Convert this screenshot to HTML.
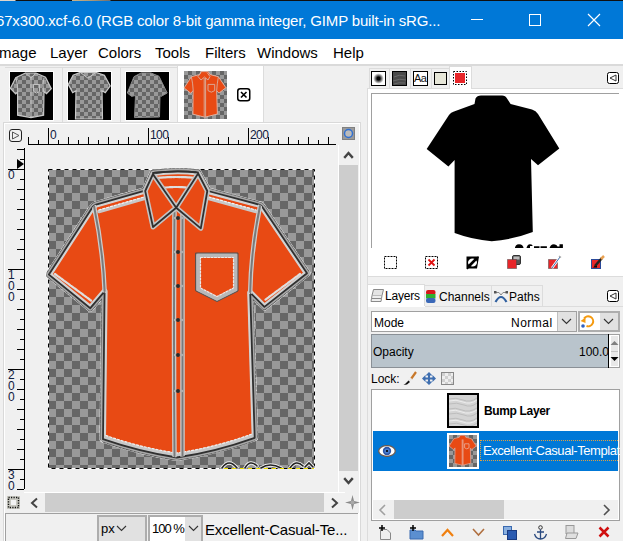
<!DOCTYPE html>
<html><head><meta charset="utf-8">
<style>
*{margin:0;padding:0;box-sizing:border-box}
html,body{width:623px;height:541px;overflow:hidden;background:#f0f0f0;font-family:"Liberation Sans",sans-serif;position:relative}
.a{position:absolute}
.t{position:absolute;white-space:nowrap;line-height:1}
</style></head><body>
<!-- title bar -->
<div class="a" style="left:0;top:0;width:623px;height:39px;background:#0078d7"></div>
<div class="a" style="left:0;top:0;width:623px;height:1px;background:linear-gradient(90deg,#ddd5cc 0,#ddd5cc 15px,#101010 16px,#101010 72px,#c8b48c 72px,#a89878 92px,#707070 110px,#101010 111px,#101010 100%)"></div>
<div class="t" style="left:-4px;top:13px;font-size:15px;color:#fff;letter-spacing:-0.16px">67x300.xcf-6.0 (RGB color 8-bit gamma integer, GIMP built-in sRG...</div>
<div class="a" style="left:471px;top:19px;width:12px;height:1px;background:#fff"></div>
<div class="a" style="left:529px;top:14px;width:12px;height:12px;border:1px solid #fff"></div>
<svg class="a" style="left:587px;top:13px" width="14" height="14"><path d="M1 1L13 13M13 1L1 13" stroke="#fff" stroke-width="1.2"/></svg>
<!-- menu bar -->
<div class="a" style="left:0;top:39px;width:623px;height:25px;background:#fff"></div>
<div class="t" style="top:45px;font-size:15px;color:#000;left:-1px">mage</div>
<div class="t" style="top:45px;font-size:15px;color:#000;left:50px">Layer</div>
<div class="t" style="top:45px;font-size:15px;color:#000;left:98px">Colors</div>
<div class="t" style="top:45px;font-size:15px;color:#000;left:155px">Tools</div>
<div class="t" style="top:45px;font-size:15px;color:#000;left:205px">Filters</div>
<div class="t" style="top:45px;font-size:15px;color:#000;left:257px">Windows</div>
<div class="t" style="top:45px;font-size:15px;color:#000;left:333px">Help</div>
<div class="a" style="left:0;top:64px;width:623px;height:2px;background:#dadada"></div>
<!-- left image tabs -->
<div class="a" style="left:5px;top:67px;width:173px;height:1px;background:#dcdcdc"></div>
<div class="a" style="left:62px;top:68px;width:1px;height:54px;background:#dcdcdc"></div>
<div class="a" style="left:120px;top:68px;width:1px;height:54px;background:#dcdcdc"></div>
<div class="a" style="left:177px;top:66px;width:87px;height:57px;background:#fff;border-left:1px solid #dcdcdc;border-right:1px solid #dcdcdc"></div>
<svg class="a" style="left:0;top:0" width="270" height="122">
<defs><pattern id="c1" x="10" y="72" width="8" height="8" patternUnits="userSpaceOnUse"><rect width="8" height="8" fill="#999"/><rect x="4" width="4" height="4" fill="#666"/><rect y="4" width="4" height="4" fill="#666"/></pattern><pattern id="c2" x="68" y="72" width="8" height="8" patternUnits="userSpaceOnUse"><rect width="8" height="8" fill="#999"/><rect x="4" width="4" height="4" fill="#666"/><rect y="4" width="4" height="4" fill="#666"/></pattern><pattern id="c3" x="126" y="72" width="8" height="8" patternUnits="userSpaceOnUse"><rect width="8" height="8" fill="#999"/><rect x="4" width="4" height="4" fill="#666"/><rect y="4" width="4" height="4" fill="#666"/></pattern><pattern id="c4" x="184" y="71" width="8" height="8" patternUnits="userSpaceOnUse"><rect width="8" height="8" fill="#999"/><rect x="4" width="4" height="4" fill="#666"/><rect y="4" width="4" height="4" fill="#666"/></pattern></defs>
<rect x="9.5" y="71.5" width="44" height="49" fill="#000" stroke="#fff"/>
<rect x="67.5" y="71.5" width="44" height="49" fill="#000" stroke="#fff"/>
<rect x="125.5" y="71.5" width="44" height="49" fill="#000" stroke="#fff"/>
<rect x="184" y="71" width="43" height="48" fill="url(#c4)"/>
<polygon points="25.3,73 35.9,73 45.5,77.2 51.3,88.75 46.5,93.6 44.0,91.6 43.6,115.2 31.0,117.6 17.6,115.2 17.6,92.1 15.7,94 10.4,88.3 15.7,77.7" fill="url(#c1)" stroke="#c8c8c8" stroke-width="1.2"/>
<path d="M31 78V117M33.5 84.5H39.5V91.5L36.5 93L33.5 91.5Z M25.3 73L31 78L35.9 73M16 78Q18 85 17.6 92M44 78Q42 85 43.6 92" fill="none" stroke="#c0c0c0" stroke-width="1"/>
<polygon points="80.3,72.4 95.7,72.4 104.4,75.3 110.2,85.9 105.3,92.6 102,90.7 102.5,119 75.5,119 76,90.7 72.7,92.6 68.3,84.4 73.1,75.3" fill="url(#c2)" stroke="#c8c8c8" stroke-width="1.2"/>
<path d="M80.3 72.4L88 78.2L95.7 72.4" fill="none" stroke="#c8c8c8"/>
<polygon points="141.2,72.9 150.8,72.9 159,76.3 167.2,93 161,96.4 160,95.5 159.5,117 134.5,117.6 135.5,95.5 131.6,96.4 127.3,93 134,76.7" fill="url(#c3)" stroke="#8a8a8a" stroke-width="1"/>
<polygon points="201.0,71.6 208.2,71.6 209.9,74.5 218.4,76.7 225.9,87.7 219.0,93.1 216.7,90.8 217.4,114.0 204.8,117.2 192.9,114.2 193.1,90.6 190.8,93.3 184.1,87.9 191.4,76.7 199.7,74.5" fill="#e84a14" stroke="#e0b0a0" stroke-width="1"/>
<path d="M204.2 78V117M205.6 78V117M191.4 77Q193 84 193.2 90.6M218.4 76.7Q217 84 216.7 90.8M208 84.4H214.7V90.6L211.3 92.2L208 90.6ZM201 72.5L198 76.5L201 80L204.5 77L208 80L210 76.5L207 72.5" fill="none" stroke="#d8b0a0" stroke-width="0.9"/>
</svg>
<svg class="a" style="left:237px;top:88px" width="14" height="14"><rect x="0.75" y="0.75" width="12" height="12" rx="2.5" fill="#fff" stroke="#000" stroke-width="1.5"/><path d="M4 4L9.5 9.5M9.5 4L4 9.5" stroke="#000" stroke-width="1.6"/></svg>
<!-- canvas frame -->
<div class="a" style="left:3px;top:122px;width:358px;height:419px;border:1px solid #d9d9d9;border-bottom:none"></div>
<div class="a" style="left:4px;top:123px;width:356px;height:418px;border:1px solid #fff;border-bottom:none"></div>
<!-- canvas -->
<svg class="a" style="left:9px;top:129px" width="14" height="14"><rect x="0.5" y="0.5" width="12" height="12" rx="2.5" fill="#f0f0f0" stroke="#222"/><path d="M3.5 3L10 6.5L3.5 10Z" fill="none" stroke="#555"/></svg>
<svg class="a" style="left:0;top:0" width="360" height="492"><path d="M28.5 137V144M38.5 140V144M48.5 128V144M58.5 140V144M68.5 137V144M78.5 140V144M88.5 137V144M98.5 140V144M108.5 137V144M118.5 140V144M128.5 137V144M138.5 140V144M148.5 128V144M158.5 140V144M168.5 137V144M178.5 140V144M188.5 137V144M198.5 140V144M208.5 137V144M218.5 140V144M228.5 137V144M238.5 140V144M248.5 128V144M258.5 140V144M268.5 137V144M278.5 140V144M288.5 137V144M298.5 140V144M308.5 137V144M318.5 140V144M328.5 137V144M28 144.5H336M17 149.5H24M20 159.5H24M8 169.5H24M20 179.5H24M17 189.5H24M20 199.5H24M17 209.5H24M20 219.5H24M17 229.5H24M20 239.5H24M17 249.5H24M20 259.5H24M8 269.5H24M20 279.5H24M17 289.5H24M20 299.5H24M17 309.5H24M20 319.5H24M17 329.5H24M20 339.5H24M17 349.5H24M20 359.5H24M8 369.5H24M20 379.5H24M17 389.5H24M20 399.5H24M17 409.5H24M20 419.5H24M17 429.5H24M20 439.5H24M17 449.5H24M20 459.5H24M8 469.5H24M20 479.5H24M17 489.5H24M24.5 148V489" stroke="#000" stroke-width="1" fill="none"/></svg>
<div class="t" style="left:50px;top:129px;font-size:12px;color:#102040;letter-spacing:-0.6px">0</div>
<div class="t" style="left:150px;top:129px;font-size:12px;color:#102040;letter-spacing:-0.6px">100</div>
<div class="t" style="left:250px;top:129px;font-size:12px;color:#102040;letter-spacing:-0.6px">200</div>
<div class="t" style="left:8px;top:170px;font-size:12px;color:#102040;width:7px;line-height:11px;white-space:normal">0</div>
<div class="t" style="left:8px;top:270px;font-size:12px;color:#102040;width:7px;line-height:11px;white-space:normal">1 0 0</div>
<div class="t" style="left:8px;top:370px;font-size:12px;color:#102040;width:7px;line-height:11px;white-space:normal">2 0 0</div>
<div class="a" style="left:0;top:470px;width:24px;height:21px;overflow:hidden"><div class="t" style="left:8px;top:0;font-size:12px;color:#102040;width:7px;line-height:11px;white-space:normal">3 0 0</div></div>
<svg class="a" style="left:17px;top:159px" width="8" height="11"><path d="M0 0L7 5L0 10Z" fill="#000"/></svg>
<svg class="a" style="left:342px;top:127px" width="14" height="14"><rect x="0" y="0" width="13" height="13" fill="#808080"/><rect x="1" y="1" width="11" height="11" fill="#9a9a9a"/><circle cx="6.5" cy="6.5" r="4" fill="#bbb" stroke="#2f6fd0" stroke-width="1.5"/></svg>
<!-- image -->
<svg class="a" style="left:0;top:0" width="360" height="492">
<defs><pattern id="chk" x="48" y="169" width="16" height="16" patternUnits="userSpaceOnUse"><rect width="16" height="16" fill="#999"/><rect x="8" width="8" height="8" fill="#666"/><rect y="8" width="8" height="8" fill="#666"/></pattern></defs>
<rect x="48" y="169" width="266" height="300" fill="url(#chk)"/>
<rect x="48.5" y="169.5" width="266" height="299" fill="none" stroke="#fff"/>
<rect x="48.5" y="169.5" width="266" height="299" fill="none" stroke="#000" stroke-dasharray="4 4"/>
<g fill="none" stroke-linecap="round">
<path d="M222 468Q229 458 237 468M245 468Q250 459 257 466M261 468Q270 462 281 468M290 468Q296 459 303 466M305 467L309 463L313 467" stroke="#eee" stroke-width="3.5"/>
<path d="M222 468Q229 458 237 468M245 468Q250 459 257 466M261 468Q270 462 281 468M290 468Q296 459 303 466M305 467L309 463L313 467" stroke="#222" stroke-width="1.6"/>
</g>
<path d="M220 468.5H314" stroke="#f0e000" stroke-dasharray="4 4" stroke-dashoffset="4"/>
<g id="shirt" stroke-linejoin="round" stroke-linecap="round">
<defs><clipPath id="bc"><path d="M153 173Q176 170 198 172.5L208 191L259 204.6Q262 205.5 263 208L307 273.3L264.4 306.9L250.2 292.7L254.7 437.8Q215 452 176.7 457.5Q140 452 103 439.2L104.6 291.4L90.3 308.2L48.9 274.6L92 208Q93.5 205.5 96 204.6L145 190.7Z"/></clipPath></defs>
<path d="M153 173Q176 170 198 172.5L208 191L259 204.6Q262 205.5 263 208L307 273.3L264.4 306.9L250.2 292.7L254.7 437.8Q215 452 176.7 457.5Q140 452 103 439.2L104.6 291.4L90.3 308.2L48.9 274.6L92 208Q93.5 205.5 96 204.6L145 190.7Z" fill="none" stroke="#fff" stroke-width="7"/><path d="M153 173Q176 170 198 172.5L208 191L259 204.6Q262 205.5 263 208L307 273.3L264.4 306.9L250.2 292.7L254.7 437.8Q215 452 176.7 457.5Q140 452 103 439.2L104.6 291.4L90.3 308.2L48.9 274.6L92 208Q93.5 205.5 96 204.6L145 190.7Z" fill="none" stroke="#555" stroke-width="6.4" stroke-dasharray="1.5 2.5"/>
<path d="M153 173Q176 170 198 172.5L208 191L259 204.6Q262 205.5 263 208L307 273.3L264.4 306.9L250.2 292.7L254.7 437.8Q215 452 176.7 457.5Q140 452 103 439.2L104.6 291.4L90.3 308.2L48.9 274.6L92 208Q93.5 205.5 96 204.6L145 190.7Z" fill="#e84a14" stroke="#a8a8a8" stroke-width="5"/>
<path d="M153 173Q176 170 198 172.5L208 191L259 204.6Q262 205.5 263 208L307 273.3L264.4 306.9L250.2 292.7L254.7 437.8Q215 452 176.7 457.5Q140 452 103 439.2L104.6 291.4L90.3 308.2L48.9 274.6L92 208Q93.5 205.5 96 204.6L145 190.7Z" fill="none" stroke="#d2d2d2" stroke-width="6" clip-path="url(#bc)"/>
<path d="M103 439.2Q140 452 176.7 457.5Q215 452 254.7 437.8" fill="none" stroke="#c8c8c8" stroke-width="9" clip-path="url(#bc)"/><path d="M106 435.5Q140 447.5 176.7 453Q215 447.5 252 434" fill="none" stroke="#f0f0f0" stroke-width="1.2" stroke-dasharray="2 2" clip-path="url(#bc)"/>
<path d="M153 173Q176 170 198 172.5L208 191L259 204.6Q262 205.5 263 208L307 273.3L264.4 306.9L250.2 292.7L254.7 437.8Q215 452 176.7 457.5Q140 452 103 439.2L104.6 291.4L90.3 308.2L48.9 274.6L92 208Q93.5 205.5 96 204.6L145 190.7Z" fill="none" stroke="#303030" stroke-width="1.8"/>
<g fill="none" clip-path="url(#bc)">
<path d="M94 206Q103 250 104.6 291M260 206Q251 250 250.2 292M174.5 212Q173.5 330 174.5 456M182.5 212V456" stroke="#cccccc" stroke-width="4.5"/>
<path d="M94 206Q103 250 104.6 291M260 206Q251 250 250.2 292M174.5 212Q173.5 330 174.5 456M182.5 212V456" stroke="#7a7a7a" stroke-width="2"/>
<path d="M198.2 255.2H235.8V289.5L217 299L198.2 289.5Z" stroke="#b8b8b8" stroke-width="4.5"/>
<path d="M196 253H238V291L217 301.5L196 291Z" stroke="#505050" stroke-width="1"/>
<path d="M200.5 257.5H233.5V288L217 296.5L200.5 288Z" stroke="#eaeaea" stroke-width="1.2" stroke-dasharray="2 1.5"/>
<path d="M99 211.5L144 198.5M209 198.5L256 211.5" stroke="#c8c8c8" stroke-width="3.5"/><path d="M99 210L144 197M209 197L256 210" stroke="#f4f4f4" stroke-width="1.2" stroke-dasharray="2 2"/>
<path d="M55 274L91 300.5M300 274L265 300M157 178Q176 176 195 178M162 188Q176 186 190 188" stroke="#dedede" stroke-width="2.2" stroke-dasharray="3 1"/>
<path d="M175 218H182M175 252H182M175 286H182M175 320H182M175 355H182M175 391H182" stroke="#b0b0b0" stroke-width="2.5"/>
</g>
<path d="M153 174L145.2 191L153 227L176.2 207.7L154.2 176ZM198.2 173.5L207.3 191L200.8 228.4L176.2 207.7L197 175.3Z" fill="#e84a14" stroke="#c4c4c4" stroke-width="5"/>
<path d="M153 174L145.2 191L153 227L176.2 207.7L154.2 176ZM198.2 173.5L207.3 191L200.8 228.4L176.2 207.7L197 175.3Z" fill="none" stroke="#303030" stroke-width="1.8"/>
<path d="M153 173Q176 170 198 172.5" fill="none" stroke="#303030" stroke-width="1.8"/>
<g fill="#2a2a2a"><circle cx="178" cy="218" r="2"/><circle cx="178" cy="252" r="2"/><circle cx="178" cy="286" r="2"/><circle cx="178" cy="320" r="2"/><circle cx="178" cy="355" r="2"/><circle cx="178" cy="391" r="2"/></g>
</g>
</svg>
<!-- scrollbars -->
<div class="a" style="left:338px;top:145px;width:1px;height:347px;background:#fff"></div>
<div class="a" style="left:339px;top:145px;width:19px;height:347px;background:#f0f0f0"></div>
<div class="a" style="left:339px;top:165px;width:19px;height:306px;background:#cdcdcd"></div>
<svg class="a" style="left:343px;top:149px" width="11" height="11"><path d="M2 8L5.5 4L9 8" fill="none" stroke="#444" stroke-width="2.4" stroke-linecap="square"/></svg>
<svg class="a" style="left:343px;top:476px" width="11" height="11"><path d="M2 3L5.5 7L9 3" fill="none" stroke="#444" stroke-width="2.4" stroke-linecap="square"/></svg>
<div class="a" style="left:45px;top:493px;width:279px;height:19px;background:#cdcdcd"></div>
<svg class="a" style="left:29px;top:497px" width="10" height="12"><path d="M8 1.5L3 6L8 10.5" fill="none" stroke="#444" stroke-width="2"/></svg>
<svg class="a" style="left:330px;top:497px" width="10" height="12"><path d="M2 1.5L7 6L2 10.5" fill="none" stroke="#444" stroke-width="2"/></svg>
<svg class="a" style="left:7px;top:496px" width="13" height="13"><rect x="0" y="0" width="13" height="13" fill="#c8c8c0"/><rect x="1.5" y="1.5" width="10" height="10" fill="none" stroke="#111" stroke-width="1.4" stroke-dasharray="1.2 1.3"/><rect x="4" y="4" width="5" height="5" fill="#f4f4f4"/></svg>
<svg class="a" style="left:345px;top:495px" width="15" height="15"><path d="M7.5 0L9 6L15 7.5L9 9L7.5 15L6 9L0 7.5L6 6Z" fill="#8a8a8a"/><circle cx="7.5" cy="7.5" r="2" fill="#a8a8a8"/></svg>
<!-- status bar -->
<div class="a" style="left:24px;top:492px;width:321px;height:1px;background:#fff"></div>
<div class="a" style="left:5px;top:513px;width:354px;height:1px;background:#a0a0a0"></div>
<div class="a" style="left:5px;top:513px;width:1px;height:28px;background:#a0a0a0"></div>
<div class="a" style="left:358px;top:513px;width:1px;height:28px;background:#fff"></div>
<div class="a" style="left:97px;top:515px;width:50px;height:28px;background:#e1e1e1;border:2px solid #adadad"></div>
<div class="t" style="left:101px;top:522px;font-size:13px;color:#000">px</div>
<svg class="a" style="left:116px;top:525px" width="11" height="7"><path d="M1 1L5.5 5.5L10 1" fill="none" stroke="#333" stroke-width="1.1"/></svg>
<div class="a" style="left:148px;top:515px;width:55px;height:28px;background:#fff;border:2px solid #adadad"></div>
<div class="a" style="left:185px;top:517px;width:16px;height:26px;background:#e1e1e1"></div>
<svg class="a" style="left:188px;top:525px" width="11" height="7"><path d="M1 1L5.5 5.5L10 1" fill="none" stroke="#333" stroke-width="1.1"/></svg>
<div class="t" style="left:152px;top:522px;font-size:13px;color:#000;letter-spacing:-1px">100 %</div>
<div class="t" style="left:205px;top:522px;font-size:15px;color:#000;letter-spacing:-0.17px">Excellent-Casual-Te...</div>
<!-- right dock -->
<div class="a" style="left:367px;top:88px;width:256px;height:453px;background:#f0f0f0;border-left:1px solid #dcdcdc"></div>
<!-- top tabs -->
<div class="a" style="left:368px;top:88px;width:255px;height:1px;background:#dcdcdc"></div>
<div class="a" style="left:369px;top:68px;width:81px;height:1px;background:#dcdcdc"></div>
<div class="a" style="left:369px;top:68px;width:1px;height:20px;background:#dcdcdc"></div>
<div class="a" style="left:389px;top:68px;width:1px;height:20px;background:#dcdcdc"></div>
<div class="a" style="left:410px;top:68px;width:1px;height:20px;background:#dcdcdc"></div>
<div class="a" style="left:431px;top:68px;width:1px;height:20px;background:#dcdcdc"></div>
<div class="a" style="left:449px;top:66px;width:23px;height:23px;background:#fff;border:1px solid #dcdcdc;border-bottom:none"></div>
<svg class="a" style="left:371px;top:71px" width="16" height="16"><defs><radialGradient id="brg"><stop offset="0" stop-color="#000"/><stop offset="0.2" stop-color="#000"/><stop offset="0.75" stop-color="#fff"/><stop offset="1" stop-color="#fff"/></radialGradient></defs><rect x="0.5" y="0.5" width="14" height="14" fill="url(#brg)" stroke="#000"/></svg>
<svg class="a" style="left:392px;top:71px" width="16" height="16"><rect x="0.5" y="0.5" width="14" height="14" fill="#4a4a4a" stroke="#000"/><path d="M2 6Q7 3 13 5M1 10Q8 7 14 9M2 13Q7 11 13 12" stroke="#6a6a6a" fill="none"/></svg>
<svg class="a" style="left:413px;top:71px" width="16" height="16"><rect x="0.5" y="0.5" width="14" height="14" fill="#fff" stroke="#000"/></svg>
<div class="t" style="left:414px;top:73px;font-size:11px;color:#111;letter-spacing:-0.5px">Aa</div>
<svg class="a" style="left:434px;top:72px" width="14" height="14"><rect x="0.5" y="0.5" width="12" height="12" fill="#e6e6d8" stroke="#000"/></svg>
<svg class="a" style="left:453px;top:71px" width="15" height="15"><rect x="0.5" y="0.5" width="13" height="13" fill="#fff" stroke="#000" stroke-dasharray="1.5 1.5"/><rect x="2" y="2" width="10" height="10" fill="#e8262a"/></svg>
<svg class="a" style="left:607px;top:72px" width="13" height="13"><rect x="0.5" y="0.5" width="11" height="11" rx="2" fill="#fff" stroke="#000"/><path d="M9 3L3 6L9 9Z" fill="none" stroke="#333"/></svg>
<!-- preview panel -->
<div class="a" style="left:368px;top:89px;width:255px;height:187px;background:#fff"></div>
<div class="a" style="left:371px;top:93px;width:248px;height:1px;background:#a0a0a0"></div>
<div class="a" style="left:371px;top:93px;width:1px;height:157px;background:#a0a0a0"></div>
<div class="a" style="left:368px;top:276px;width:255px;height:1px;background:#dcdcdc"></div>
<svg class="a" style="left:368px;top:89px" width="255" height="187">
<path d="M107.5 9.5Q109 6.5 113 6.5H134Q137.5 6.5 139 9.5L142.6 14.9L164 20.5Q168 21.5 170 25L191.3 59.6L170 76.2L163 70L164.8 142.9Q145 150.5 123.7 152.3Q104 150.5 86.6 144L86.6 71L80.4 77.6L58.7 60L81 26Q83 23 86 22.5L106.5 14.9Z" fill="#000"/>
<path d="M146.8 160Q147 155.5 151 155.3Q155.5 155.5 155.7 160ZM158.3 160Q159 155.5 162 155.3Q164.7 155.5 164.7 157H162V160ZM166 160V157.3H171.5V160ZM172.5 160V157.3H178.9V160ZM181.4 160Q182 155.5 186 155.3Q189 155.5 189.5 157.5L191.5 157.5V155.3H194.9V160Z" fill="#000"/>
</svg>
<div class="a" style="left:368px;top:248px;width:255px;height:28px;background:#fff"></div>
<svg class="a" style="left:384px;top:256px" width="14" height="14"><rect x="0.5" y="0.5" width="12" height="12" fill="none" stroke="#000" stroke-dasharray="2 1"/></svg>
<svg class="a" style="left:425px;top:256px" width="14" height="14"><rect x="0.5" y="0.5" width="12" height="12" fill="none" stroke="#000" stroke-dasharray="2 1"/><path d="M3.5 3.5L9.5 9.5M9.5 3.5L3.5 9.5" stroke="#e01010" stroke-width="1.8"/></svg>
<svg class="a" style="left:466px;top:256px" width="14" height="14"><path d="M0.5 0.5H13L11 12.5H0.5Z" fill="#000"/><ellipse cx="6.5" cy="6.5" rx="4.5" ry="4" fill="#fff"/><path d="M1 13L12 1" stroke="#000" stroke-width="1.5"/><path d="M3 10L10 3" stroke="#000" stroke-width="2.5"/></svg>
<svg class="a" style="left:507px;top:255px" width="14" height="15"><rect x="5.5" y="0.5" width="8" height="9" rx="1.5" fill="#555" stroke="#333"/><rect x="6.5" y="1.5" width="6" height="3" fill="#bbb"/><rect x="0.5" y="4.5" width="9" height="9" fill="#e8262a" stroke="#444" stroke-dasharray="1 1"/></svg>
<svg class="a" style="left:548px;top:255px" width="14" height="15"><rect x="0.5" y="4.5" width="9" height="9" fill="#e8262a" stroke="#444" stroke-dasharray="1 1"/><path d="M4 13L12 2" stroke="#fff" stroke-width="2.4"/><path d="M4 13L12 2" stroke="#4070b0" stroke-width="1"/><path d="M11 1L13 2.5" stroke="#aaa" stroke-width="1.5"/></svg>
<svg class="a" style="left:590px;top:255px" width="15" height="15"><rect x="1.5" y="4.5" width="9" height="9" fill="#e8262a" stroke="#2a4a9a"/><path d="M3 12.5L7 9V12.5Z" fill="#000"/><path d="M5 11L12 3" stroke="#222" stroke-width="2.5"/><path d="M11 4L14 1" stroke="#e8a050" stroke-width="2.5"/></svg>
<!-- layers tabs -->
<div class="a" style="left:367px;top:284px;width:58px;height:23px;background:#fff;border:1px solid #dcdcdc;border-bottom:none"></div>
<div class="a" style="left:425px;top:285px;width:118px;height:1px;background:#dcdcdc"></div>
<div class="a" style="left:425px;top:286px;width:67px;height:20px;border-right:1px solid #dcdcdc"></div>
<div class="a" style="left:492px;top:286px;width:51px;height:20px;border-right:1px solid #dcdcdc"></div>
<div class="a" style="left:368px;top:306px;width:255px;height:1px;background:#dcdcdc"></div>
<div class="a" style="left:368px;top:307px;width:255px;height:234px;background:#f0f0f0"></div>
<div class="a" style="left:368px;top:306px;width:57px;height:1px;background:#fff"></div>
<svg class="a" style="left:370px;top:288px" width="15" height="15"><path d="M3.5 1.5H13.5L12 7.5H2Z" fill="#e4e4e4" stroke="#8a8a8a"/><path d="M2 7.5L1.5 10.5H11.5L12 7.5M1.5 10.5L1 13.5H11L11.5 10.5" fill="#eee" stroke="#8a8a8a"/></svg>
<div class="t" style="left:385px;top:290px;font-size:12px;color:#000;letter-spacing:-0.2px">Layers</div>
<svg class="a" style="left:426px;top:290px" width="10" height="13"><rect x="0" y="0" width="9.5" height="5" rx="2" fill="#d81818"/><rect x="0" y="4" width="9.5" height="4.5" fill="#30b030"/><rect x="0" y="8" width="9.5" height="5" rx="2" fill="#3a68b8"/></svg>
<div class="t" style="left:439px;top:291px;font-size:12px;color:#000">Channels</div>
<svg class="a" style="left:494px;top:290px" width="14" height="13"><path d="M1.5 12Q7 2 12.5 12" fill="none" stroke="#2f5f9f" stroke-width="2.2"/><path d="M1 2.5H5M9 2.5H13M5 2.5L7 5M9 2.5L7 5" stroke="#8a8a8a" stroke-width="1"/><rect x="0" y="1" width="2.5" height="2.5" fill="#555"/><rect x="11.5" y="1" width="2.5" height="2.5" fill="#555"/></svg>
<div class="t" style="left:509px;top:291px;font-size:12px;color:#000">Paths</div>
<svg class="a" style="left:607px;top:290px" width="13" height="13"><rect x="0.5" y="0.5" width="11" height="11" rx="2" fill="#fff" stroke="#000"/><path d="M9 3L3 6L9 9Z" fill="none" stroke="#333"/></svg>
<!-- mode row -->
<div class="a" style="left:371px;top:311px;width:206px;height:21px;background:#fff;border:1px solid #a0a0a0"></div>
<div class="t" style="left:374px;top:317px;font-size:12px;color:#000">Mode</div>
<div class="t" style="left:511px;top:317px;font-size:12px;color:#000;letter-spacing:0.5px">Normal</div>
<div class="a" style="left:557px;top:312px;width:19px;height:19px;background:#e1e1e1;border-left:1px solid #c0c0c0"></div>
<svg class="a" style="left:561px;top:318px" width="11" height="7"><path d="M1 1L5.5 5.5L10 1" fill="none" stroke="#333" stroke-width="1.1"/></svg>
<div class="a" style="left:578px;top:311px;width:42px;height:21px;background:#fff;border:2px solid #adadad"></div>
<div class="a" style="left:600px;top:313px;width:18px;height:17px;background:#e1e1e1"></div>
<svg class="a" style="left:603px;top:318px" width="11" height="7"><path d="M1 1L5.5 5.5L10 1" fill="none" stroke="#333" stroke-width="1.1"/></svg>
<svg class="a" style="left:580px;top:313px" width="16" height="17"><path d="M4 5.5A5 5 0 1 1 6.5 13" fill="none" stroke="#f59a10" stroke-width="2"/><path d="M0.5 8L5.5 4.5V10Z" fill="#f59a10"/><circle cx="3" cy="13" r="1.8" fill="#3060c0"/></svg>
<!-- opacity -->
<div class="a" style="left:371px;top:334px;width:238px;height:34px;background:#b9c4cc;border:1px solid #8a9096"></div>
<div class="a" style="left:608px;top:334px;width:1px;height:34px;background:#000"></div>
<div class="t" style="left:373px;top:346px;font-size:12px;color:#000">Opacity</div>
<div class="t" style="left:579px;top:346px;font-size:12px;color:#000">100.0</div>
<div class="a" style="left:609px;top:334px;width:11px;height:34px;background:#fff;border:1px solid #a0a0a0;border-left:none"></div>
<svg class="a" style="left:609px;top:334px" width="11" height="34"><rect x="2" y="2" width="7" height="30" fill="#e8e8e8"/><path d="M1.5 11L5.5 7L9.5 11Z" fill="#808080"/><path d="M1.5 23L5.5 27L9.5 23Z" fill="#000"/><path d="M2 17.5H9" stroke="#c4c4c4"/></svg>
<!-- lock row -->
<div class="t" style="left:371px;top:373px;font-size:12px;color:#000">Lock:</div>
<svg class="a" style="left:403px;top:371px" width="14" height="15"><path d="M13 1L8 8" stroke="#c8782a" stroke-width="2.2"/><path d="M8.5 7.5L5.5 10.5" stroke="#e8e8e8" stroke-width="2.4"/><path d="M5.5 9.5L2 13L0.5 14L4 13.5L7 11Z" fill="#111"/></svg>
<svg class="a" style="left:422px;top:372px" width="14" height="13"><path d="M7 0L10.5 3.5H3.5ZM7 13L10.5 9.5H3.5ZM0 6.5L3.5 3V10ZM14 6.5L10.5 3V10Z" fill="#3f6fb0"/><path d="M7 2V11M2 6.5H12" stroke="#3f6fb0" stroke-width="2"/></svg>
<svg class="a" style="left:441px;top:372px" width="13" height="13"><rect x="0.5" y="0.5" width="12" height="12" fill="#eee" stroke="#888"/><path d="M1 1h3v3H1zM7 1h3v3H7zM4 4h3v3H4zM10 4h2v3h-2zM1 7h3v3H1zM7 7h3v3H7zM4 10h3v2H4zM10 10h2v2h-2z" fill="#d0d0d0"/></svg>
<!-- layers list -->
<div class="a" style="left:371px;top:389px;width:249px;height:132px;background:#fff;border:1px solid #a0a0a0"></div>
<div class="a" style="left:447px;top:393px;width:32px;height:35px;background:#d4d4d4;border:2px solid #000"></div>
<svg class="a" style="left:449px;top:395px" width="28" height="31"><path d="M0 4Q7 2 14 5T28 3M0 9Q8 7 15 10T28 8M0 14Q6 12 13 15T28 13M0 19Q8 17 15 20T28 18M0 24Q7 22 14 25T28 23M0 29Q8 27 15 30T28 28" fill="none" stroke="#bdbdbd" stroke-width="1"/><path d="M0 6Q7 4 14 7T28 5M0 16Q6 14 13 17T28 15M0 26Q7 24 14 27T28 25" fill="none" stroke="#ececec" stroke-width="1"/></svg>
<div class="t" style="left:484px;top:405px;font-size:12px;font-weight:bold;color:#000;letter-spacing:-0.35px">Bump Layer</div>
<div class="a" style="left:373px;top:431px;width:245px;height:40px;background:#0078d7"></div>
<svg class="a" style="left:378px;top:445px" width="18" height="12"><ellipse cx="9" cy="6" rx="8.3" ry="5.4" fill="#fff" stroke="#6a5a50" stroke-width="1.3"/><circle cx="9" cy="6" r="4.2" fill="#2a55a8"/><circle cx="9" cy="6" r="2.6" fill="#4a7fd0"/><circle cx="9" cy="6" r="1.1" fill="#000"/></svg>
<div class="a" style="left:447px;top:433px;width:32px;height:36px;background:#fff"></div>
<svg class="a" style="left:0;top:0" width="623" height="541"><defs><pattern id="c5" x="449" y="435" width="8" height="8" patternUnits="userSpaceOnUse"><rect width="8" height="8" fill="#999"/><rect x="4" width="4" height="4" fill="#666"/><rect y="4" width="4" height="4" fill="#666"/></pattern></defs>
<rect x="449" y="435" width="28" height="32" fill="url(#c5)"/>
<polygon points="460.1,435.4 464.8,435.4 465.8,437.3 471.4,438.7 476.3,446.0 471.8,449.5 470.3,448.0 470.8,463.2 462.5,465.3 454.8,463.4 455.0,447.9 453.5,449.6 449.1,446.1 453.8,438.7 459.2,437.3" fill="#e84a14" stroke="#e0a090" stroke-width="0.8"/>
<path d="M462.2 439.5V465.0M463.0 439.5V465.0M464.6 443.8H469.0V447.8L466.8 448.9L464.6 447.8Z" fill="none" stroke="#e8b0a0" stroke-width="0.8"/>
</svg>
<div class="a" style="left:480px;top:440px;width:138px;height:21px;border:1px dotted #e0a040;border-right:none"></div>
<div class="a" style="left:371px;top:440px;width:249px;height:30px;overflow:hidden;pointer-events:none"><div class="t" style="left:112px;top:4px;font-size:13px;color:#fff;letter-spacing:-0.45px">Excellent-Casual-Template</div></div>
<div class="a" style="left:618px;top:431px;width:1px;height:40px;background:#fff"></div>
<div class="a" style="left:373px;top:500px;width:245px;height:19px;background:#f0f0f0"></div>
<div class="a" style="left:394px;top:500px;width:110px;height:19px;background:#cdcdcd"></div>
<svg class="a" style="left:378px;top:504px" width="10" height="12"><path d="M7 1L2 6L7 11" fill="none" stroke="#a0a0a0" stroke-width="1.6"/></svg>
<svg class="a" style="left:602px;top:504px" width="10" height="12"><path d="M2 1L7 6L2 11" fill="none" stroke="#505050" stroke-width="1.6"/></svg>
<!-- bottom icons -->
<svg class="a" style="left:378px;top:525px" width="15" height="15"><path d="M2.5 4.5H9L12.5 8V14.5H2.5Z" fill="#eee" stroke="#888"/><path d="M4 0V6M1 3H7" stroke="#000" stroke-width="1.5"/></svg>
<svg class="a" style="left:409px;top:525px" width="15" height="15"><path d="M1 5H6L7 6H14V14H1Z" fill="#5b8fd0" stroke="#3a6ab0"/><path d="M4 0V6M1 3H7" stroke="#000" stroke-width="1.5"/></svg>
<svg class="a" style="left:441px;top:528px" width="13" height="9"><path d="M1 8L6.5 2L12 8" fill="none" stroke="#f08010" stroke-width="2.2"/></svg>
<svg class="a" style="left:472px;top:528px" width="13" height="9"><path d="M1 1L6.5 7L12 1" fill="none" stroke="#b07040" stroke-width="1.6"/></svg>
<svg class="a" style="left:503px;top:526px" width="14" height="14"><rect x="0.5" y="0.5" width="8" height="8" fill="#8ab0e0" stroke="#3a6ab0"/><rect x="4.5" y="4.5" width="9" height="9" fill="#2a5ab0" stroke="#1a3a80"/></svg>
<svg class="a" style="left:533px;top:525px" width="15" height="15"><circle cx="7.5" cy="2.5" r="1.8" fill="none" stroke="#333"/><path d="M7.5 4.5V14M4 7H11M1.5 9Q3 14 7.5 14Q12 14 13.5 9" fill="none" stroke="#2a4a80" stroke-width="1.3"/></svg>
<svg class="a" style="left:565px;top:525px" width="14" height="14"><rect x="1" y="0.5" width="8" height="8" fill="#ddd" stroke="#999"/><path d="M2 8H13L11 13.5H0.5Z" fill="#e0e0e0" stroke="#999"/></svg>
<svg class="a" style="left:598px;top:526px" width="12" height="12"><path d="M1.5 1.5L10.5 10.5M10.5 1.5L1.5 10.5" stroke="#d01010" stroke-width="2.5"/></svg>
</body></html>
